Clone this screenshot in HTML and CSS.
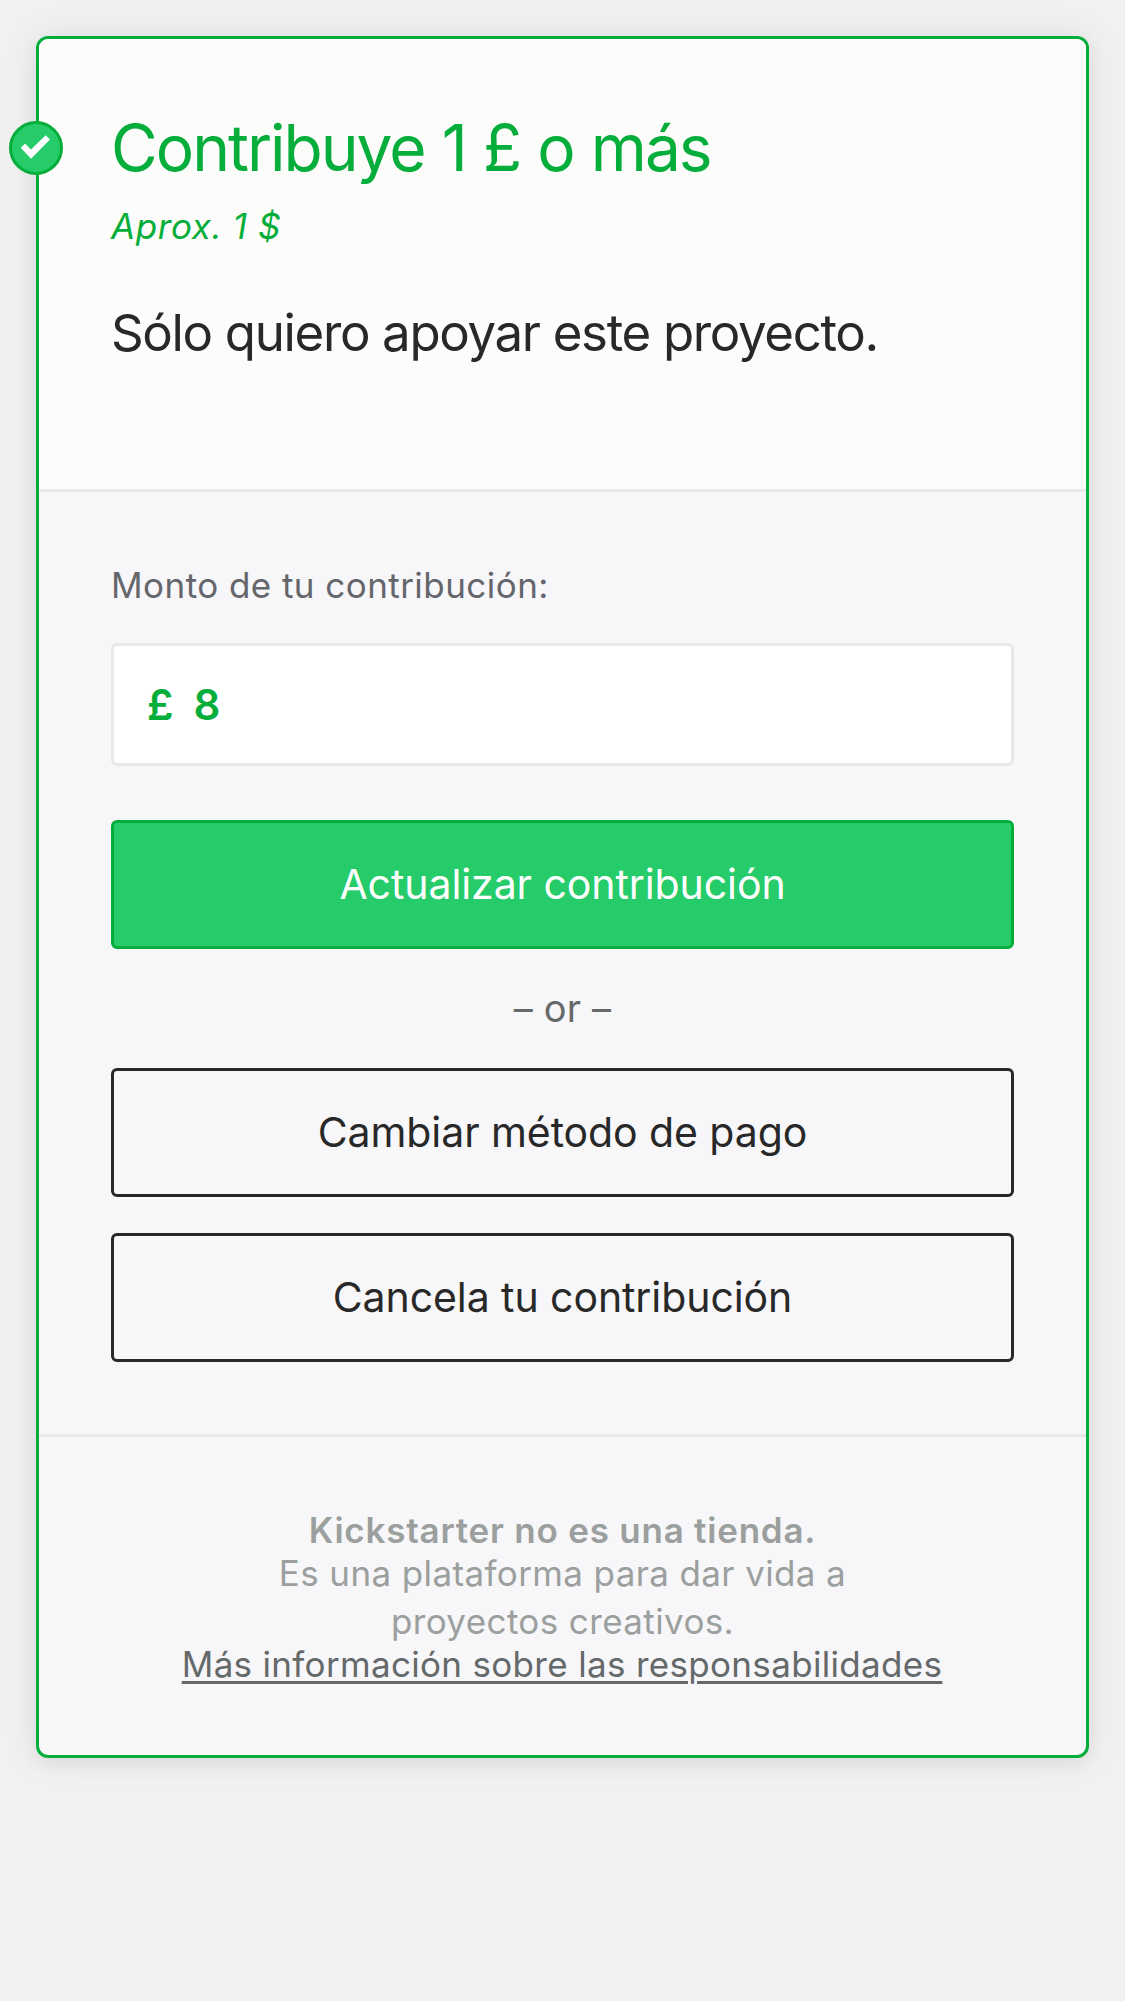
FILE: index.html
```
<!DOCTYPE html>
<html lang="es">
<head>
<meta charset="utf-8">
<title>Contribución</title>
<link rel="stylesheet" href="styles.css">
</head>
<body>
<main class="card">
  <span class="badge"><svg viewBox="0 0 54 54" width="54" height="54"><circle cx="27" cy="27" r="25.5" fill="#25cc69" stroke="#05ad3b" stroke-width="3"/><path d="M11.7 26.7L16 22.4L22 28.6L36.7 14.3L41 18.4L22 37.7Z" fill="#fff"/></svg></span>
  <section class="reward">
    <h1 class="title">Contribuye 1 £ o más</h1>
    <p class="approx">Aprox. 1 $</p>
    <p class="description">Sólo quiero apoyar este proyecto.</p>
  </section>
  <form class="pledge">
    <label class="label">Monto de tu contribución:</label>
    <div class="amount"><span class="currency">£</span><span class="value">8</span></div>
    <button type="button" class="button primary">Actualizar contribución</button>
    <p class="or">– or –</p>
    <button type="button" class="button">Cambiar método de pago</button>
    <button type="button" class="button last">Cancela tu contribución</button>
  </form>
  <footer class="notice">
    <strong class="strong">Kickstarter no es una tienda.</strong>
    <p class="copy">Es una plataforma para dar vida a<br>proyectos creativos.</p>
    <a class="link">Más información sobre las responsabilidades</a>
  </footer>
</main>
</body>
</html>
```
FILE: styles.css
```
* { box-sizing: border-box; }
body { margin: 0; padding: 36px; min-height: 2001px; background: #f1f1f1; font-family: Inter, sans-serif; color: #282828; }
h1, p { margin: 0; font-weight: 400; }
.card { position: relative; height: 1722px; border: 3px solid #05ad3b; border-radius: 12px; background: #f7f7f9; box-shadow: 0 0 36px rgba(0,0,0,.08), 0 6px 18px rgba(0,0,0,.05); }
.badge { position: absolute; left: -30px; top: 82px; line-height: 0; }
.reward { height: 453px; padding: 70px 72px 0; background: #fcfcfa; border-bottom: 3px solid #e8e8e8; border-radius: 9px 9px 0 0; }
.title { font-size: 64px; line-height: 78px; letter-spacing: -2px; word-spacing: 1.2px; color: #05ad3b; white-space: nowrap; }
.approx { margin-top: 15px; font-size: 35px; line-height: 48px; letter-spacing: .6px; font-style: italic; color: #05ad3b; }
.description { margin-top: 45px; font-size: 51px; line-height: 76px; letter-spacing: -1.35px; white-space: nowrap; }
.pledge { height: 945px; padding: 71px 72px 72px; display: flex; flex-direction: column; border-bottom: 3px solid #e8e8e8; }
.label { font-size: 35px; line-height: 45px; letter-spacing: .45px; color: #65666b; }
.amount { margin-top: 35px; height: 123px; padding: 0 33px; display: flex; align-items: center; gap: 20px; background: #fff; border: 3px solid #e8e8e8; border-radius: 6px; font-size: 42px; font-weight: 600; color: #05ad3b; }
.button { height: 129px; flex: none; padding: 0 0 2px; border: 3px solid #282828; border-radius: 6px; background: transparent; font: 400 41px Inter, sans-serif; letter-spacing: -.08px; color: #282828; }
.primary { margin-top: 54px; background: #25cc69; border-color: #05ad3b; color: #fff; }
.or { height: 119px; line-height: 119px; text-align: center; font-size: 38px; letter-spacing: .2px; color: #656969; }
.last { margin-top: 36px; }
.notice { padding-top: 72px; text-align: center; font-size: 35px; color: #9b9f9e; display: flex; flex-direction: column; align-items: center; }
.strong { line-height: 42px; letter-spacing: .78px; font-weight: 600; }
.copy { margin-top: -2px; line-height: 48px; letter-spacing: .38px; }
.link { margin-right: 1px; line-height: 39px; letter-spacing: .32px; color: #656969; text-decoration: underline; text-decoration-thickness: 3px; text-underline-offset: 4px; }
```
